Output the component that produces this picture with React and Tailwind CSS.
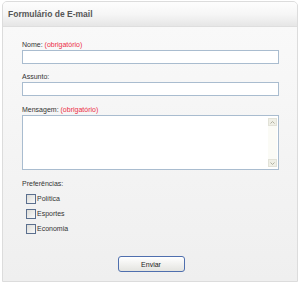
export default function App() {
  const font = { fontFamily: '"Liberation Sans", Arial, sans-serif' };
  return (
    <div className="w-[300px] h-[293px] bg-white pt-px pl-[2px] pr-[2px]" style={font}>
      <div className="w-[296px] h-[281px] rounded-t-[5px] border border-[#dcdcdc] bg-[#f1f1f1] flex flex-col overflow-hidden">
        <div className="h-[25px] shrink-0 bg-gradient-to-b from-[#fdfdfd] via-[#f6f6f6] to-[#e6e6e6] border-b border-[#dedede] flex items-center pl-[5px]">
          <span className="text-[8.5px] font-bold text-[#555] leading-none">Formulário de E-mail</span>
        </div>
        <div className="flex-1 bg-gradient-to-b from-[#f9f9f9] to-[#efefef] pl-[19px] pr-[18px] pt-[13px] flex flex-col text-[7px] text-[#333] leading-[10px]">
          <div className="h-[10px]">Nome: <span className="text-[#ec2d45]">(obrigatório)</span></div>
          <div className="h-[14px] border border-[#a9bccf] bg-white" />
          <div className="mt-[8px] h-[10px]">Assunto:</div>
          <div className="h-[14px] border border-[#a9bccf] bg-white" />
          <div className="mt-[9px] h-[10px]">Mensagem: <span className="text-[#ec2d45]">(obrigatório)</span></div>
          <div className="h-[55px] border border-[#a9bccf] bg-white flex justify-end py-[2px] pr-px">
            <div className="w-[9px] bg-[#fbfbf6] flex flex-col justify-between">
              <div className="h-[8px] bg-[#efefe6] border border-[#e2e2d8] flex items-center justify-center">
                <svg width="5" height="3" viewBox="0 0 5 3"><path d="M0.5 2.5 L2.5 0.5 L4.5 2.5" fill="none" stroke="#b0b0a0" strokeWidth="1" /></svg>
              </div>
              <div className="h-[8px] bg-[#efefe6] border border-[#e2e2d8] flex items-center justify-center">
                <svg width="5" height="3" viewBox="0 0 5 3"><path d="M0.5 0.5 L2.5 2.5 L4.5 0.5" fill="none" stroke="#b0b0a0" strokeWidth="1" /></svg>
              </div>
            </div>
          </div>
          <div className="mt-[9px] h-[10px]">Preferências:</div>
          <div className="mt-[5px] flex flex-col gap-[5px] pl-[4px]">
            {["Política", "Esportes", "Economia"].map((t) => (
              <div key={t} className="flex items-center gap-px h-[10px]">
                <div className="w-[10px] h-[10px] border border-[#5b6f8e] bg-gradient-to-br from-[#dcdcd8] to-[#fafafa]" />
                <span>{t}</span>
              </div>
            ))}
          </div>
          <div className="flex justify-center mt-[22px] pl-[1px]">
            <button className="w-[67px] h-[16px] rounded-[3px] border border-[#4f6fae] bg-gradient-to-b from-white to-[#e4e4e0] text-[7px] text-[#222] leading-none">Enviar</button>
          </div>
        </div>
      </div>
    </div>
  );
}
